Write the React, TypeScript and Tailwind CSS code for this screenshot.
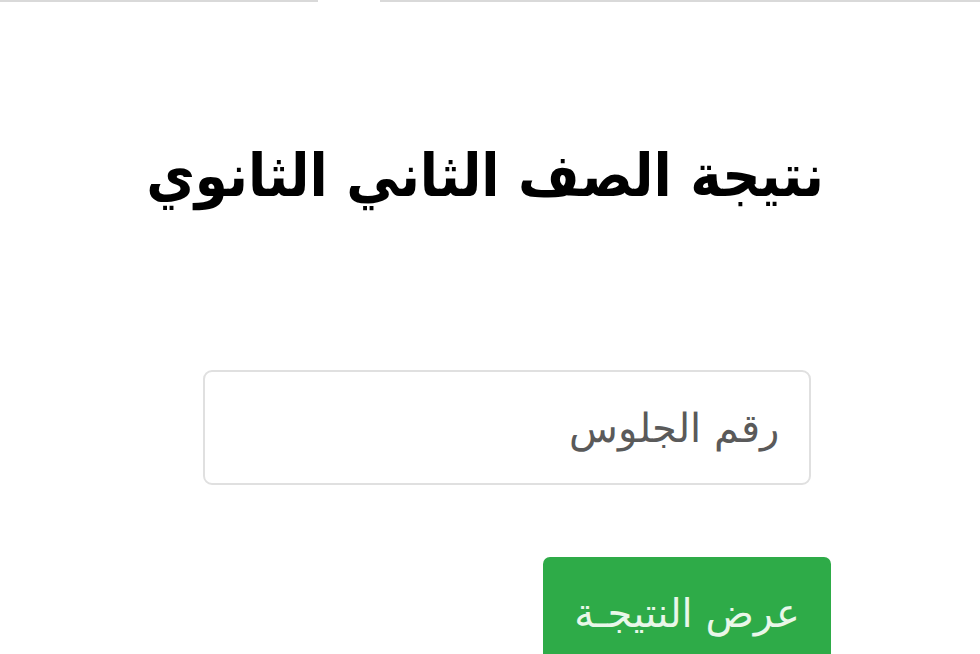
export default function App() {
  return (
    <div
      dir="rtl"
      className="w-[980px] h-[654px] overflow-hidden bg-white flex flex-col"
      style={{ fontFamily: '"DejaVu Sans", sans-serif' }}
    >
      {/* thin top rule with a short gap */}
      <div className="flex h-[2px] shrink-0" dir="ltr">
        <div className="w-[318px] bg-[#d9d9d9]" />
        <div className="w-[62px] bg-white" />
        <div className="flex-1 bg-[#d9d9d9]" />
      </div>

      <h1
        className="mt-[128px] pr-[10px] text-center text-[59px] leading-[92px] font-bold text-black"
        style={{ fontFamily: '"DejaVu Sans Condensed", "DejaVu Sans", sans-serif' }}
      >
        نتيجة الصف الثاني الثانوي
      </h1>

      <div className="flex flex-col items-center mt-[148px] pl-[34px]" dir="ltr">
        <div className="w-[608px] h-[115px] rounded-[9px] border-2 border-[#e0e0e0] bg-white flex items-center justify-end pr-[30px]">
          <span dir="rtl" className="text-[40px] text-[#5a5a5a] font-light">
            رقم الجلوس
          </span>
        </div>

        <div className="flex w-[608px] justify-end mt-[72px]">
          <button className="w-[288px] h-[110px] rounded-[7px] bg-[#2eab48] flex items-start justify-center pt-[30px] -mr-[20px]">
            <span dir="rtl" className="text-[40px] leading-[52px] text-[#e9f7e9]">
              عرض النتيجـة
            </span>
          </button>
        </div>
      </div>
    </div>
  );
}
